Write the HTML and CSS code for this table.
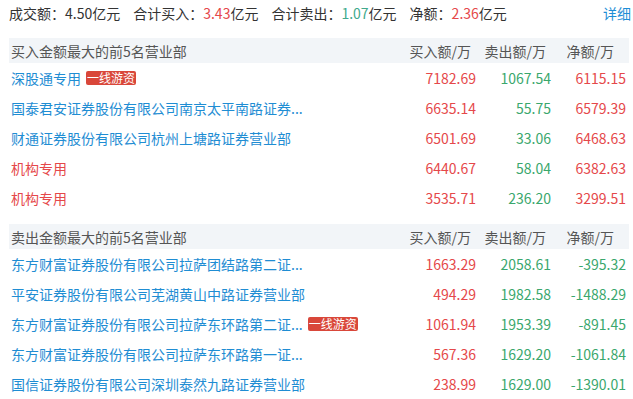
FILE: index.html
```html
<!DOCTYPE html>
<html lang="zh-CN">
<head>
<meta charset="utf-8">
<title>营业部</title>
<link rel="stylesheet" href="styles.css">
</head>
<body>
<div class="page">
  <div class="summary">
    <div class="stats">
      <span class="stat">成交额：<span class="val">4.50</span>亿元</span>
      <span class="stat">合计买入：<span class="val up">3.43</span>亿元</span>
      <span class="stat">合计卖出：<span class="val down">1.07</span>亿元</span>
      <span class="stat">净额：<span class="val up">2.36</span>亿元</span>
    </div>
    <a class="more">详细</a>
  </div>

  <div class="section">
    <div class="row head">
      <div class="name">买入金额最大的前5名营业部</div>
      <div class="num h1">买入额/万</div>
      <div class="num h2">卖出额/万</div>
      <div class="num h3">净额/万</div>
    </div>
    <div class="row">
      <div class="name link">深股通专用<span class="tag">一线游资</span></div>
      <div class="num up">7182.69</div><div class="num down">1067.54</div><div class="num up">6115.15</div>
    </div>
    <div class="row">
      <div class="name link">国泰君安证券股份有限公司南京太平南路证券...</div>
      <div class="num up">6635.14</div><div class="num down">55.75</div><div class="num up">6579.39</div>
    </div>
    <div class="row">
      <div class="name link">财通证券股份有限公司杭州上塘路证券营业部</div>
      <div class="num up">6501.69</div><div class="num down">33.06</div><div class="num up">6468.63</div>
    </div>
    <div class="row">
      <div class="name inst">机构专用</div>
      <div class="num up">6440.67</div><div class="num down">58.04</div><div class="num up">6382.63</div>
    </div>
    <div class="row">
      <div class="name inst">机构专用</div>
      <div class="num up">3535.71</div><div class="num down">236.20</div><div class="num up">3299.51</div>
    </div>
  </div>

  <div class="section">
    <div class="row head">
      <div class="name">卖出金额最大的前5名营业部</div>
      <div class="num h1">买入额/万</div>
      <div class="num h2">卖出额/万</div>
      <div class="num h3">净额/万</div>
    </div>
    <div class="row">
      <div class="name link">东方财富证券股份有限公司拉萨团结路第二证...</div>
      <div class="num up">1663.29</div><div class="num down">2058.61</div><div class="num down">-395.32</div>
    </div>
    <div class="row">
      <div class="name link">平安证券股份有限公司芜湖黄山中路证券营业部</div>
      <div class="num up">494.29</div><div class="num down">1982.58</div><div class="num down">-1488.29</div>
    </div>
    <div class="row">
      <div class="name link">东方财富证券股份有限公司拉萨东环路第二证...<span class="tag">一线游资</span></div>
      <div class="num up">1061.94</div><div class="num down">1953.39</div><div class="num down">-891.45</div>
    </div>
    <div class="row">
      <div class="name link">东方财富证券股份有限公司拉萨东环路第一证...</div>
      <div class="num up">567.36</div><div class="num down">1629.20</div><div class="num down">-1061.84</div>
    </div>
    <div class="row">
      <div class="name link">国信证券股份有限公司深圳泰然九路证券营业部</div>
      <div class="num up">238.99</div><div class="num down">1629.00</div><div class="num down">-1390.01</div>
    </div>
  </div>
</div>
</body>
</html>
```

FILE: styles.css
```css
* { box-sizing: border-box; }
html, body { margin: 0; padding: 0; background: #fff; }
body {
  font-family: "Noto Sans CJK SC", "Noto Sans", sans-serif;
  font-size: 14px;
  color: #333;
}
.page {
  width: 633px;
  padding: 0 4px 0 9px;
}
.summary {
  display: flex;
  justify-content: space-between;
  align-items: center;
  height: 26px;
  line-height: 26px;
  margin-bottom: 12px;
  padding-right: 0;
  margin-right: -2px;
}
.stats { display: flex; gap: 13px; white-space: nowrap; }
.stat { color: #333; }
.val { color: #333; }
.up { color: #e5484a; }
.down { color: #3aa76d; }
.stats .down { color: #41a98c; }
.more { color: #1e8ed6; cursor: pointer; }

.section { margin-bottom: 11px; }
.row {
  display: flex;
  align-items: center;
  height: 30px;
  padding: 0 3px 0 2px;
  white-space: nowrap;
}
.row.head {
  height: 25px;
  background: #f2f5f8;
  color: #555;
}
.name {
  flex: 1;
  display: flex;
  align-items: center;
  overflow: hidden;
}
.link { color: #1f8dd3; }
.inst { color: #e5484a; }
.num {
  width: 75px;
  text-align: right;
}
.head .h1, .head .h2 { padding-right: 5px; }
.head .h3 { padding-right: 12px; }
.tag {
  display: inline-block;
  margin-left: 5px;
  height: 14px;
  line-height: 14px;
  padding: 0 1px;
  font-size: 12px;
  color: #fff;
  background: #d9473a;
  border-radius: 2px;
}
```
